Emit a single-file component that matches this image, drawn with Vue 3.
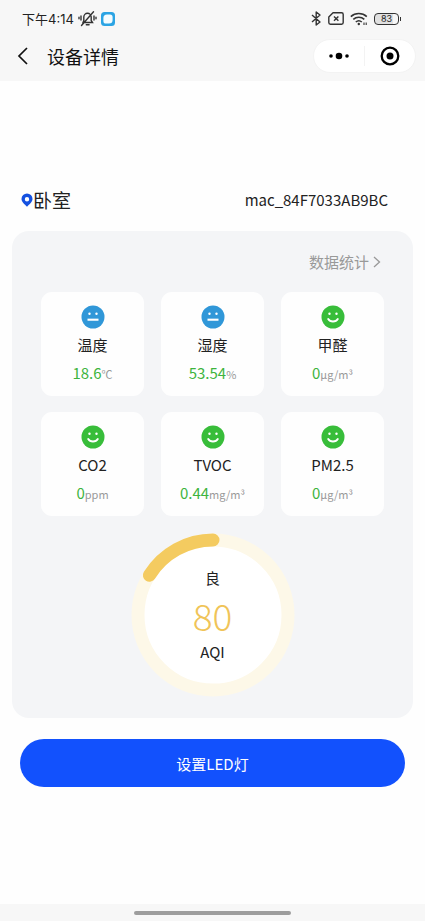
<script setup>
const metrics = [
  { name: '温度', value: '18.6', unit: '℃', mood: 'neutral' },
  { name: '湿度', value: '53.54', unit: '%', mood: 'neutral' },
  { name: '甲醛', value: '0', unit: 'μg/m³', mood: 'happy' },
  { name: 'CO2', value: '0', unit: 'ppm', mood: 'happy' },
  { name: 'TVOC', value: '0.44', unit: 'mg/m³', mood: 'happy' },
  { name: 'PM2.5', value: '0', unit: 'μg/m³', mood: 'happy' },
]
</script>

<template>
  <div class="page">
    <header class="top">
      <div class="status">
        <div class="status-side">
          <span class="time">下午4:14</span>
          <svg class="bell" width="19" height="17" viewBox="0 0 19 17" fill="none" stroke="#333" stroke-width="1.4" stroke-linecap="round">
            <path d="M5 12.5h9.5l-1.3-2V7a3.7 3.7 0 0 0-7.4 0v3.5zM8.3 14.8h2.8M3.5 15.5 15.5 1.8M3 6v4M1 7.2v1.6M16 6v4M18 7.2v1.6" />
          </svg>
          <svg class="app-badge" width="14" height="14" viewBox="0 0 14 14">
            <rect width="14" height="14" rx="3.5" fill="#2ba4e4" />
            <path d="M6 2.4h3A2.600 2.600 0 0 1 11.600 5v3A3.600 3.600 0 0 1 8 11.600H5A2.600 2.600 0 0 1 2.400 9V6A3.600 3.600 0 0 1 6 2.400z" fill="#f4fcff" />
          </svg>
        </div>
        <div class="status-side icons">
          <svg width="11" height="15" viewBox="0 0 11 15" fill="none" stroke="#333" stroke-width="1.4" stroke-linejoin="round">
            <path d="m1 4 8 7-3.8 3V1L9 4l-8 7" />
          </svg>
          <svg width="16" height="13" viewBox="0 0 16 13" fill="none" stroke="#333" stroke-width="1.4">
            <path d="M5 .8h8.6a1.6 1.6 0 0 1 1.6 1.6v8.2a1.6 1.6 0 0 1-1.6 1.6H2.4A1.6 1.6 0 0 1 .8 10.6V5z" stroke-linejoin="round" />
            <path d="m6 4.4 4.4 4.4m0-4.4L6 8.8" />
          </svg>
          <svg width="18" height="14" viewBox="0 0 18 14" fill="none" stroke="#333" stroke-width="1.6">
            <path d="M.8 4.6a12 12 0 0 1 16 0M3.3 7.3a8.3 8.3 0 0 1 11 0M5.8 10a4.6 4.6 0 0 1 6 0" />
            <circle cx="8.8" cy="12" r="1.2" fill="#333" stroke="none" />
            <path d="M14 10.500v2.500M16.200 10.500v2.500" stroke-width="1.1" />
          </svg>
          <span class="battery"><span class="battery-body">83</span><span class="battery-tip"></span></span>
        </div>
      </div>
      <nav class="nav">
        <button class="back" type="button" aria-label="返回">
          <svg width="11" height="18" viewBox="0 0 11 18" fill="none" stroke="#111" stroke-width="1.7"><path d="M10 1 2 9l8 8" /></svg>
        </button>
        <h1>设备详情</h1>
        <div class="capsule">
          <button type="button" aria-label="更多">
            <svg width="20" height="8" viewBox="0 0 20 8"><circle cx="2" cy="4" r="1.8" /><circle cx="10" cy="4" r="3.3" /><circle cx="18" cy="4" r="1.8" /></svg>
          </button>
          <button class="close" type="button" aria-label="关闭">
            <svg width="20" height="20" viewBox="0 0 20 20"><circle cx="10" cy="10" r="8.3" fill="none" stroke="#000" stroke-width="2.3" /><circle cx="10" cy="10" r="3.5" /></svg>
          </button>
        </div>
      </nav>
    </header>

    <main class="content">
      <div class="device">
        <div class="room">
          <svg width="12" height="14" viewBox="0 0 12 14"><path fill-rule="evenodd" fill="#1451e0" d="M6 .5a5.5 5.5 0 0 1 5.5 5.5c0 3-3 5.2-5.5 7.7C3.5 11.2.5 9 .5 6A5.5 5.5 0 0 1 6 .5zM6 4a2.2 2.2 0 1 0 0 4.4A2.2 2.2 0 0 0 6 4z" /></svg>
          <span>卧室</span>
        </div>
        <span class="mac">mac_84F7033AB9BC</span>
      </div>

      <section class="panel">
        <a class="stats" href="#">
          数据统计
          <svg width="8" height="12" viewBox="0 0 8 12" fill="none" stroke="#999" stroke-width="1.3"><path d="m1 1 5.5 5L1 11" /></svg>
        </a>
        <div class="grid">
          <article v-for="m in metrics" :key="m.name" class="card">
            <svg width="24" height="24" viewBox="0 0 24 24">
              <circle cx="12" cy="12" r="11.5" :fill="m.mood === 'happy' ? '#38bd3a' : '#3097d8'" />
              <circle cx="8.5" cy="8.700" r="1.2" fill="#fff" /><circle cx="15.5" cy="8.700" r="1.2" fill="#fff" />
              <path v-if="m.mood === 'happy'" d="M7.200 14c1.900 3.300 7.700 3.300 9.600 0" fill="none" stroke="#fff" stroke-width="1.900" stroke-linecap="round" />
              <path v-else d="M6.500 14.700h11" stroke="#fff" stroke-width="2.1" />
            </svg>
            <h2>{{ m.name }}</h2>
            <p><span class="value">{{ m.value }}</span><span class="unit">{{ m.unit }}</span></p>
          </article>
        </div>
        <div class="gauge">
          <svg class="ring" viewBox="0 0 164 164">
            <circle cx="82" cy="82" r="75" fill="#fff" stroke="#fdf8e8" stroke-width="13" />
            <path d="M82 7A75 75 0 0 0 18.4 42.2" fill="none" stroke="#f4cb60" stroke-width="13" stroke-linecap="round" />
          </svg>
          <div class="reading">
            <span>良</span>
            <strong>80</strong>
            <span>AQI</span>
          </div>
        </div>
      </section>

      <button class="primary" type="button">设置LED灯</button>
    </main>

    <footer class="home"><span></span></footer>
  </div>
</template>

<style>
body {
  margin: 0;
  background: #fefefe;
}
</style>

<style scoped>
.page {
  display: flex;
  flex-direction: column;
  min-height: 100vh;
  font-family: "Noto Sans CJK SC", "Noto Sans", sans-serif;
  color: #222;
}
button {
  padding: 0;
  border: 0;
  background: none;
  font: inherit;
  cursor: pointer;
}
svg {
  display: block;
  flex: none;
}
.top {
  background: #f7f7f7;
  padding-bottom: 7px;
}
.status {
  display: flex;
  align-items: center;
  justify-content: space-between;
  height: 37px;
  padding: 0 24px 0 22px;
}
.status-side {
  display: flex;
  align-items: center;
  gap: 4px;
}
.time {
  font-family: "Inter", "Noto Sans CJK SC", sans-serif;
  font-size: 13px;
  line-height: 20px;
}
.icons {
  gap: 6px;
}
.battery {
  display: flex;
  align-items: center;
  gap: 1px;
}
.battery-body {
  box-sizing: border-box;
  width: 25px;
  height: 12px;
  border: 1px solid #333;
  border-radius: 4px;
  background: linear-gradient(90deg, #e0e0e0 80%, #f7f7f7 80%);
  font-family: "Inter", sans-serif;
  font-size: 9px;
  line-height: 10px;
  text-align: center;
}
.battery-tip {
  width: 1px;
  height: 4px;
  background: #333;
}
.nav {
  display: flex;
  align-items: center;
  height: 37px;
  padding: 0 9px 0 17px;
}
.nav h1 {
  flex: 1;
  margin: 0 0 0 19px;
  font-size: 18px;
  font-weight: 400;
  line-height: 26px;
  color: #111;
}
.capsule {
  display: flex;
  align-items: center;
  box-sizing: border-box;
  width: 103px;
  height: 34px;
  border: 1px solid #f3f3f3;
  border-radius: 17px;
  background: #fff;
}
.capsule button {
  display: flex;
  flex: 1;
  align-items: center;
  justify-content: center;
  height: 20px;
}
.capsule .close {
  border-left: 1px solid #f3f3f3;
}
.content {
  flex: 1;
  padding: 103px 12px 0;
}
.device {
  display: flex;
  align-items: center;
  justify-content: space-between;
  height: 32px;
  padding: 0 25px 0 9px;
}
.room {
  display: flex;
  align-items: center;
  font-size: 19px;
  line-height: 28px;
}
.mac {
  font-size: 15px;
  line-height: 24px;
}
.panel {
  display: flex;
  flex-direction: column;
  margin-top: 15px;
  padding: 20px 29px 21px;
  border-radius: 17px;
  background: #f4f5f7;
}
.stats {
  display: flex;
  align-items: center;
  align-self: flex-end;
  gap: 4px;
  padding-right: 3px;
  color: #999;
  font-size: 15px;
  line-height: 22px;
  text-decoration: none;
}
.grid {
  display: grid;
  grid-template-columns: repeat(3, 1fr);
  gap: 16px 17px;
  margin-top: 19px;
}
.card {
  display: flex;
  flex-direction: column;
  align-items: center;
  padding: 13px 0 11px;
  border-radius: 11px;
  background: #fefefe;
}
.card h2 {
  margin: 5px 0;
  font-size: 15px;
  font-weight: 400;
  line-height: 22px;
}
.card p {
  display: flex;
  align-items: baseline;
  margin: 0;
  line-height: 24px;
  white-space: nowrap;
}
.value {
  color: #3db43d;
  font-size: 15px;
}
.unit {
  color: #999;
  font-size: 11px;
  line-height: 16px;
}
.gauge {
  display: grid;
  place-items: center;
  align-self: center;
  margin-top: 17px;
}
.gauge > * {
  grid-area: 1 / 1;
}
.ring {
  width: 164px;
  height: 164px;
}
.reading {
  display: flex;
  flex-direction: column;
  align-items: center;
  font-size: 15px;
  line-height: 22px;
}
.reading strong {
  color: #f0c458;
  font-size: 37px;
  font-weight: 300;
  line-height: 52px;
}
.primary {
  display: block;
  width: calc(100% - 16px);
  height: 48px;
  margin: 21px auto 0;
  border-radius: 24px;
  background: #1251fd;
  color: #fff;
  font-size: 15px;
}
.home {
  display: flex;
  align-items: center;
  justify-content: center;
  height: 17px;
  background: #f7f7f7;
}
.home span {
  width: 37%;
  height: 4px;
  border-radius: 2px;
  background: #9d9d9d;
}
</style>
